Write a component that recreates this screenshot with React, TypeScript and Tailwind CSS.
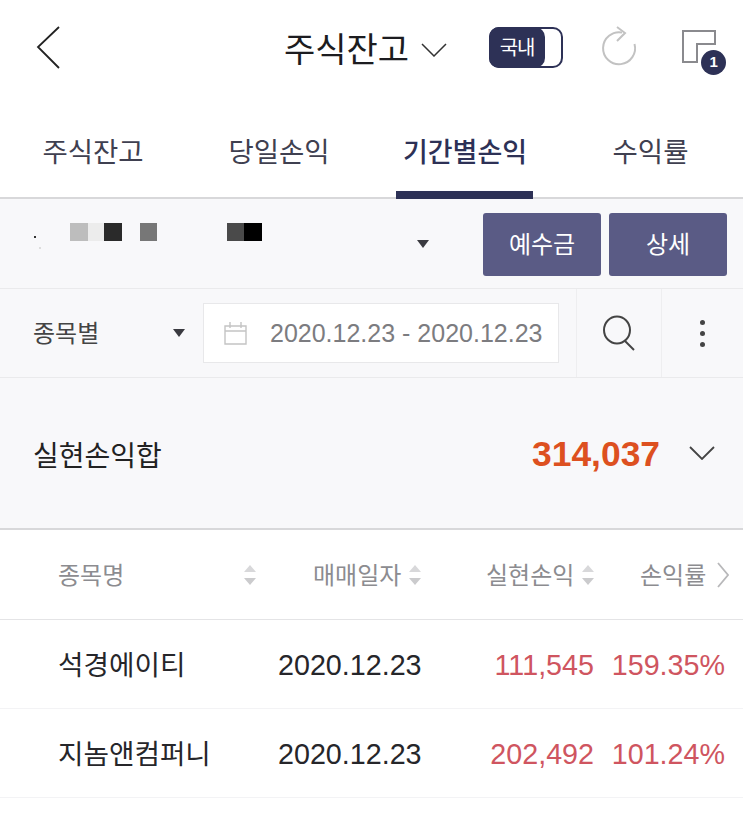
import React from "react";

const rows = [
  { name: "석경에이티", date: "2020.12.23", amount: "111,545", rate: "159.35%" },
  { name: "지놈앤컴퍼니", date: "2020.12.23", amount: "202,492", rate: "101.24%" },
];

const SortIcon = () => (
  <svg width="14" height="22" viewBox="0 0 14 22" className="shrink-0">
    <path d="M7 1 L13 8 H1 Z" fill="#d8d8da" />
    <path d="M7 21 L13 14 H1 Z" fill="#cbcbcd" />
  </svg>
);

const Caret = () => (
  <svg width="12" height="8" viewBox="0 0 12 8" className="block">
    <path d="M0 0 H12 L6 8 Z" fill="#3a3a40" />
  </svg>
);

export default function App() {
  return (
    <div className="w-[743px] h-[833px] overflow-hidden bg-white font-['Liberation_Sans','Noto_Sans_CJK_KR',sans-serif]">
      {/* top bar */}
      <div className="h-[100px] flex items-start">
        <svg width="26" height="44" viewBox="0 0 26 44" className="ml-[36px] mt-[26px]">
          <path d="M23 1 L2 21 L23 42" fill="none" stroke="#222" strokeWidth="1.8" />
        </svg>
        <div className="ml-[222px] mt-[26px] flex items-center">
          <span className="text-[34px] leading-[48px] text-[#1c1c20]">주식잔고</span>
          <svg width="26" height="14" viewBox="0 0 26 14" className="ml-[12px]">
            <path d="M1 1 L13 13 L25 1" fill="none" stroke="#333" strokeWidth="1.5" />
          </svg>
        </div>
        <div className="ml-[42px] mt-[27px] w-[74px] h-[41px] rounded-[10px] border-2 border-[#2d3156] flex">
          <div className="-m-[2px] w-[56px] h-[41px] rounded-[10px] bg-[#2d3156] flex items-center justify-center text-[20px] tracking-[-1px] text-white">
            국내
          </div>
        </div>
        <svg width="38" height="42" viewBox="0 0 38 42" className="ml-[37px] mt-[25px]">
          <path d="M22 7.5 A16 16 0 1 0 34.5 19" fill="none" stroke="#c2c2c2" strokeWidth="2" />
          <path d="M17 2 L25 8 L17 16" fill="none" stroke="#c2c2c2" strokeWidth="2" />
        </svg>
        <div className="ml-[44px] mt-[30px] relative w-[44px] h-[44px]">
          <svg width="34" height="34" viewBox="0 0 34 34" className="block">
            <path d="M1 1 H33 V14 H15 V32 H1 Z" fill="none" stroke="#8a8a8e" strokeWidth="2" />
          </svg>
          <div className="absolute left-[19px] top-[20px] w-[25px] h-[25px] rounded-full bg-[#2d3156] text-white text-[15px] font-bold flex items-center justify-center">
            1
          </div>
        </div>
      </div>

      {/* tabs */}
      <div className="h-[99px] border-b-2 border-[#d8d8da] flex">
        <div className="w-[186px] pt-[32px] text-center text-[27.5px] leading-[42px] text-[#3f4050]">주식잔고</div>
        <div className="w-[186px] pt-[32px] text-center text-[27.5px] leading-[42px] text-[#3f4050]">당일손익</div>
        <div className="w-[186px] relative pt-[32px] text-center text-[27px] leading-[42px] font-medium text-[#2d3156]">
          기간별손익
          <div className="absolute left-[24px] bottom-[-2px] w-[137px] h-[8px] bg-[#2d3156]" />
        </div>
        <div className="w-[185px] pt-[32px] text-center text-[27.5px] leading-[42px] text-[#3f4050]">수익률</div>
      </div>

      {/* account row */}
      <div className="h-[90px] bg-[#f8f8fa] border-b border-[#eaeaec] flex">
        <div className="relative w-[430px]">
          <div className="absolute left-[70px] top-[24px] flex">
            <div className="w-[18px] h-[18px] bg-[#bdbdbd]" />
            <div className="w-[16px] h-[18px] bg-[#ececec]" />
            <div className="w-[18px] h-[18px] bg-[#2a2a2a]" />
            <div className="ml-[18px] w-[17px] h-[18px] bg-[#777]" />
            <div className="ml-[70px] w-[17px] h-[18px] bg-[#4a4a4a]" />
            <div className="w-[18px] h-[18px] bg-black" />
          </div>
          <div className="absolute left-[34px] top-[37px] w-[2px] h-[2px] bg-[#333]" />
          <div className="absolute left-[39px] top-[48px] w-[2px] h-[2px] bg-[#ddd]" />
          <div className="absolute right-[1px] top-[41px]">
            <Caret />
          </div>
        </div>
        <button className="ml-[53px] mt-[14px] w-[118px] h-[63px] rounded-[3px] bg-[#5a5b85] text-white text-[24px]">예수금</button>
        <button className="ml-[8px] mt-[14px] w-[118px] h-[63px] rounded-[3px] bg-[#5a5b85] text-white text-[24px]">상세</button>
      </div>

      {/* filter row */}
      <div className="h-[89px] bg-[#f8f8fa] border-b border-[#eaeaec] flex">
        <div className="w-[203px] flex items-center pl-[33px]">
          <span className="mt-[2px] text-[24px] text-[#444]">종목별</span>
          <div className="ml-[74px]">
            <Caret />
          </div>
        </div>
        <div className="w-[356px] h-[60px] mt-[14px] bg-white border border-[#e8e8ea] flex items-center pl-[20px]">
          <svg width="23" height="24" viewBox="0 0 23 24" className="shrink-0">
            <path d="M1 5 H22 V23 H1 Z M1 10 H22 M6 1 V7 M17 1 V7" fill="none" stroke="#c4c4c4" strokeWidth="1.4" />
          </svg>
          <span className="ml-[23px] mt-[2px] text-[25px] text-[#7c7c80] whitespace-nowrap">2020.12.23 - 2020.12.23</span>
        </div>
        <div className="ml-[17px] w-[85px] border-l border-[#eeeef0] flex items-center justify-center">
          <svg width="34" height="36" viewBox="0 0 34 36">
            <ellipse cx="15" cy="15" rx="13" ry="13.5" fill="none" stroke="#444" strokeWidth="2" />
            <path d="M23 26 L32 35" stroke="#444" strokeWidth="2" />
          </svg>
        </div>
        <div className="flex-1 border-l border-[#eeeef0] flex flex-col items-center justify-center gap-[6px]">
          <div className="w-[5px] h-[5px] rounded-full bg-[#444]" />
          <div className="w-[5px] h-[5px] rounded-full bg-[#444]" />
          <div className="w-[5px] h-[5px] rounded-full bg-[#444]" />
        </div>
      </div>

      {/* summary */}
      <div className="h-[152px] bg-[#f8f8fa] border-b-2 border-[#d8d8da] flex items-center pl-[33px] pr-[28px]">
        <span className="text-[28px] leading-[40px] mt-[7px] text-[#222]">실현손익합</span>
        <span className="ml-auto mt-[4px] text-[35.4px] font-bold text-[#dd5020]">314,037</span>
        <svg width="26" height="14" viewBox="0 0 26 14" className="ml-[29px]">
          <path d="M1 1 L13 13 L25 1" fill="none" stroke="#444" strokeWidth="1.8" />
        </svg>
      </div>

      {/* table header */}
      <div className="h-[90px] border-b border-[#e4e4e6] flex items-center text-[24px] text-[#8c8c90]">
        <span className="ml-[58px] mt-[2px] w-[185px]">종목명</span>
        <SortIcon />
        <span className="ml-[56px] mt-[2px] w-[88px] whitespace-nowrap">매매일자</span>
        <div className="ml-[7px]">
          <SortIcon />
        </div>
        <span className="ml-[64px] mt-[2px] w-[88px] whitespace-nowrap">실현손익</span>
        <div className="ml-[7px]">
          <SortIcon />
        </div>
        <span className="ml-[45px] mt-[2px] whitespace-nowrap">손익률</span>
        <svg width="12" height="26" viewBox="0 0 12 26" className="ml-[11px]">
          <path d="M1 1 L11 13 L1 25" fill="none" stroke="#b8b8ba" strokeWidth="1.8" />
        </svg>
      </div>

      {/* rows */}
      {rows.map((r) => (
        <div key={r.name} className="h-[89px] pt-[4px] border-b border-[#f3f3f5] flex items-center text-[28.7px]">
          <span className="ml-[58px] w-[220px] text-[27.7px] text-[#26262a] whitespace-nowrap">{r.name}</span>
          <span className="w-[143px] text-[#26262a] whitespace-nowrap">{r.date}</span>
          <span className="w-[173px] text-right text-[#cf5560]">{r.amount}</span>
          <span className="w-[131px] text-right text-[#cf5560]">{r.rate}</span>
        </div>
      ))}
    </div>
  );
}
